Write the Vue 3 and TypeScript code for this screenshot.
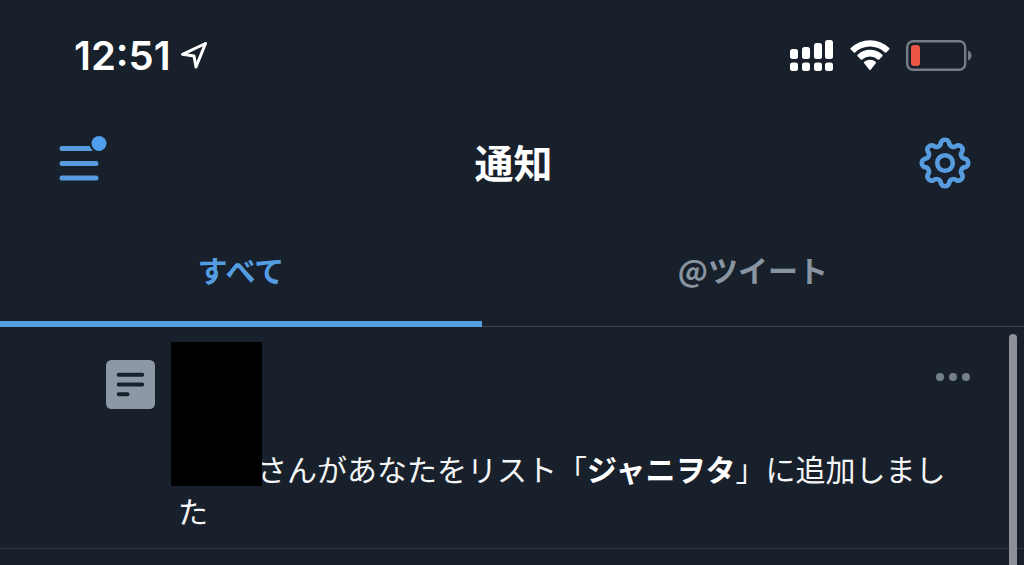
<script setup lang="ts">
import { ref } from 'vue'

interface Tab {
  id: string
  label: string
}

const tabs: Tab[] = [
  { id: 'all', label: 'すべて' },
  { id: 'mentions', label: '@ツイート' },
]
const active = ref<string>('all')
const listName = 'ジャニヲタ'
</script>

<template>
  <div class="screen">
    <div class="status">
      <div class="clock">
        <span class="time">12:51</span>
        <svg class="location" viewBox="0 0 28 30" width="28" height="30" aria-hidden="true">
          <path d="M25.500 2.500 L2.500 13.300 L14 15 L16 26 Z" />
        </svg>
      </div>
      <div class="indicators">
        <svg viewBox="0 0 44 32" width="44" height="32" fill="#fff" aria-hidden="true">
          <rect x="0" y="9" width="8" height="10" rx="2.5" />
          <rect x="12" y="7" width="8" height="12" rx="2.5" />
          <rect x="24" y="3" width="8" height="16" rx="2.5" />
          <rect x="35" y="0" width="8" height="19" rx="2.5" />
          <rect x="0" y="22.500" width="8" height="8.500" rx="2.5" />
          <rect x="12" y="22.500" width="8" height="8.500" rx="2.5" />
          <rect x="24" y="22.500" width="8" height="8.500" rx="2.5" />
          <rect x="35" y="22.500" width="8" height="8.500" rx="2.5" />
        </svg>
        <svg viewBox="0 0 40 32" width="40" height="32" fill="#fff" aria-hidden="true">
          <path d="M.8 9.400 Q0 8.700 .8 8 A27.500 27.500 0 0 1 39.200 8 Q40 8.700 39.200 9.400 L36.200 12.400 Q35.500 13 34.800 12.400 A21.500 21.500 0 0 0 5.200 12.400 Q4.500 13 3.800 12.400 Z" />
          <path d="M7.600 16.200 Q6.900 15.500 7.600 14.800 A18 18 0 0 1 32.400 14.800 Q33.100 15.500 32.400 16.200 L29.200 19.400 Q28.500 20 27.800 19.400 A12 12 0 0 0 12.200 19.400 Q11.500 20 10.800 19.400 Z" />
          <path d="M14.200 23.200 Q13.500 22.500 14.300 21.800 A9 9 0 0 1 25.700 21.800 Q26.500 22.500 25.800 23.200 L20.700 29.700 Q20 30.400 19.300 29.700 Z" />
        </svg>
        <svg viewBox="0 0 66 32" width="66" height="32" aria-hidden="true">
          <rect x="1.200" y="1.200" width="58" height="28.600" rx="6" fill="none" stroke="#777d87" stroke-width="2.400" />
          <rect x="5" y="5" width="9" height="21" rx="3" fill="#eb5545" />
          <path d="M62 10.500 Q65.500 12 65.500 15.500 Q65.500 19 62 20.500 Z" fill="#777d87" />
        </svg>
      </div>
    </div>

    <header class="bar">
      <button class="icon-button" type="button" aria-label="メニュー">
        <svg viewBox="0 0 50 56" width="50" height="56" aria-hidden="true">
          <path d="M4 13.500H38M4 28.500H38M4 43H38" stroke="#579cdf" stroke-width="5" stroke-linecap="round" />
          <circle cx="41" cy="8.500" r="9.500" fill="#18202b" />
          <circle cx="41" cy="8.500" r="7.500" fill="#4f9fec" />
        </svg>
      </button>
      <h1 class="title">通知</h1>
      <button class="icon-button" type="button" aria-label="設定">
        <svg viewBox="-26 -26 52 52" width="52" height="52" fill="none" stroke="#579cdf" stroke-width="4.600" aria-hidden="true">
          <path
            d="M20.400 -4.100 A4.400 4.400 0 0 1 20.400 4.100 A4.400 4.400 0 0 0 17.300 11.600
               A4.400 4.400 0 0 1 11.600 17.300 A4.400 4.400 0 0 0 4.100 20.400
               A4.400 4.400 0 0 1 -4.100 20.400 A4.400 4.400 0 0 0 -11.600 17.300
               A4.400 4.400 0 0 1 -17.300 11.600 A4.400 4.400 0 0 0 -20.400 4.100
               A4.400 4.400 0 0 1 -20.400 -4.100 A4.400 4.400 0 0 0 -17.300 -11.600
               A4.400 4.400 0 0 1 -11.600 -17.300 A4.400 4.400 0 0 0 -4.100 -20.400
               A4.400 4.400 0 0 1 4.100 -20.400 A4.400 4.400 0 0 0 11.600 -17.300
               A4.400 4.400 0 0 1 17.300 -11.600 A4.400 4.400 0 0 0 20.400 -4.100 Z"
          />
          <circle r="7.800" />
        </svg>
      </button>
    </header>

    <nav class="tabs">
      <button
        v-for="tab in tabs"
        :key="tab.id"
        type="button"
        class="tab"
        :class="{ active: active === tab.id }"
        @click="active = tab.id"
      >
        {{ tab.label }}
      </button>
    </nav>

    <main class="list">
      <article class="notice">
        <svg class="list-icon" viewBox="0 0 50 50" width="49" height="49" aria-hidden="true">
          <rect width="50" height="50" rx="5.500" fill="#8c98a5" />
          <path d="M13 15H37M13 25H37M13 35H22" stroke="#18202b" stroke-width="4" stroke-linecap="round" />
        </svg>
        <div class="body">
          <span class="redaction"></span>
          <button class="more" type="button" aria-label="その他">
            <svg viewBox="0 0 34 10" width="34" height="10" fill="#73808b" aria-hidden="true">
              <circle cx="4" cy="5" r="4" />
              <circle cx="17" cy="5" r="4" />
              <circle cx="30" cy="5" r="4" />
            </svg>
          </button>
          <p class="message">さんがあなたをリスト「<strong>{{ listName }}</strong>」に追加しました</p>
        </div>
      </article>
      <span class="scrollbar"></span>
    </main>
  </div>
</template>

<style>
body {
  margin: 0;
  background: #18202b;
}
</style>

<style scoped>
.screen {
  display: flex;
  flex-direction: column;
  min-height: 100vh;
  background: #18202b;
  color: #fff;
  font-family: "Noto Sans CJK JP", sans-serif;
}

button {
  margin: 0;
  padding: 0;
  border: 0;
  background: none;
  color: inherit;
  font: inherit;
  cursor: pointer;
}

svg {
  display: block;
}

.status {
  display: flex;
  align-items: center;
  justify-content: space-between;
  height: 112px;
  padding: 0 52px 0 74px;
}

.clock,
.indicators {
  display: flex;
  align-items: center;
}

.clock {
  gap: 9px;
}

.indicators {
  gap: 16px;
}

.time {
  font-family: Inter, sans-serif;
  font-size: 40px;
  font-weight: 600;
  line-height: 48px;
}

.location path {
  fill: none;
  stroke: #fff;
  stroke-width: 3;
  stroke-linejoin: round;
}

.bar {
  display: flex;
  align-items: center;
  justify-content: space-between;
  height: 102px;
  padding: 0 53px 0 58px;
}

.title {
  margin: 0;
  padding-bottom: 4px;
  font-size: 39px;
  font-weight: 700;
  line-height: 56px;
}

.tabs {
  display: grid;
  grid-template-columns: 8fr 9fr;
  height: 112px;
  border-bottom: 1px solid #3c444f;
}

.tab {
  margin-bottom: -1px;
  padding-top: 2px;
  border-bottom: 6px solid transparent;
  color: #8895a1;
  font-size: 30px;
  font-weight: 700;
}

.tab.active {
  border-color: #549de2;
  color: #549de2;
}

.list {
  position: relative;
  flex: 1;
}

.notice {
  display: flex;
  gap: 23px;
  padding: 33px 54px 17px 106px;
  border-bottom: 1px solid #2c343f;
}

.list-icon {
  flex: none;
}

.body {
  position: relative;
  flex: 1;
}

.redaction {
  position: absolute;
  top: -18px;
  left: -7px;
  width: 91px;
  height: 144px;
  background: #000;
}

.more {
  display: block;
  margin: 12px 0 65px auto;
}

.message {
  margin: 0;
  color: #f4f5f6;
  font-size: 30px;
  line-height: 42px;
  text-indent: 79px;
}

.message strong {
  color: #fff;
  font-weight: 700;
}

.scrollbar {
  position: absolute;
  top: 7px;
  right: 7px;
  bottom: 0;
  width: 8px;
  border-radius: 4px 4px 0 0;
  background: #8e9095;
}
</style>
